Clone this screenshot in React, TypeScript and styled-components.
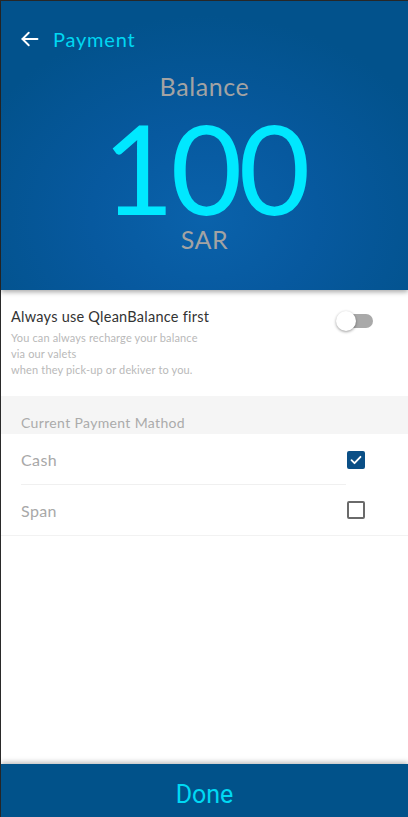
import React, { useState } from "react";
import styled, { createGlobalStyle } from "styled-components";

const Global = createGlobalStyle`
  html, body { margin: 0; padding: 0; height: 100%; }
  body {
    font-family: Lato, "Noto Sans", sans-serif;
    background: #ffffff;
    overflow: hidden;
  }
  #root { height: 100%; }
`;

const Screen = styled.div`
  height: 817px;
  box-sizing: border-box;
  border-top: 1px solid #2a2a2a;
  border-left: 1px solid #2a2a2a;
  display: flex;
  flex-direction: column;
  background: #ffffff;
`;

const Header = styled.header`
  height: 289px;
  flex-shrink: 0;
  background: radial-gradient(ellipse 62% 70% at 50% 75%, #0a62ab 0%, #07599f 45%, #02528c 100%);
  box-shadow: 0 2px 5px rgba(0, 0, 0, 0.35);
  position: relative;
  z-index: 1;
  display: flex;
  flex-direction: column;
  align-items: center;
`;

const TopBar = styled.div`
  align-self: stretch;
  display: flex;
  align-items: center;
  gap: 13px;
  padding: 25px 0 0 19px;
  height: 26px;
`;

const Title = styled.span`
  color: #00d7f2;
  font-size: 20px;
  letter-spacing: 0.8px;
`;

const BalanceLabel = styled.div`
  margin-top: 20px;
  color: #a3a3a3;
  font-size: 25px;
  letter-spacing: 0.6px;
  line-height: 28px;
`;

const Amount = styled.div`
  color: #00e8ff;
  font-size: 124px;
  font-weight: 400;
  line-height: 100px;
  margin-top: 17px;
  letter-spacing: -4px;
`;

const Currency = styled.div`
  color: #a3a3a3;
  font-size: 25px;
  letter-spacing: 0.5px;
  line-height: 28px;
  margin-top: 8px;
`;

const Body = styled.main`
  flex: 1;
  display: flex;
  flex-direction: column;
`;

const ToggleRow = styled.section`
  display: flex;
  justify-content: space-between;
  align-items: flex-start;
  padding: 18px 35px 16px 10px;
  height: 106px;
  box-sizing: border-box;
`;

const ToggleText = styled.div`
  display: flex;
  flex-direction: column;
`;

const ToggleTitle = styled.div`
  font-size: 14.5px;
  letter-spacing: 0.25px;
  color: #333333;
  line-height: 18px;
`;

const ToggleHint = styled.div`
  margin-top: 4px;
  font-size: 11px;
  letter-spacing: 0.15px;
  color: #b9b9b9;
  line-height: 16px;
`;

const Switch = styled.button`
  position: relative;
  width: 37px;
  height: 20px;
  margin-top: 3px;
  padding: 0;
  border: none;
  background: transparent;
  cursor: pointer;
`;

const Track = styled.span`
  position: absolute;
  left: 6px;
  right: 0;
  top: 3px;
  height: 14px;
  border-radius: 7px;
  background: #a9a9a9;
`;

const Thumb = styled.span`
  position: absolute;
  left: 0;
  top: 0;
  width: 20px;
  height: 20px;
  border-radius: 50%;
  background: #ffffff;
  box-shadow: 0 1px 3px rgba(0, 0, 0, 0.4);
`;

const SectionHead = styled.div`
  background: #f5f5f5;
  height: 38px;
  box-sizing: border-box;
  padding: 18px 0 0 20px;
  font-size: 14px;
  letter-spacing: 0.35px;
  color: #ababab;
  line-height: 18px;
`;

const Option = styled.label<{ $last?: boolean }>`
  display: flex;
  align-items: center;
  justify-content: space-between;
  height: 51px;
  box-sizing: border-box;
  padding: 0 43px 0 20px;
  position: relative;
  cursor: pointer;
  border-bottom: ${(p) => (p.$last ? "1px solid #f2f2f2" : "none")};
  &::after {
    content: "";
    display: ${(p) => (p.$last ? "none" : "block")};
    position: absolute;
    left: 20px;
    right: 62px;
    bottom: 0;
    height: 1px;
    background: #f0f0f0;
  }
`;

const OptionText = styled.span`
  font-size: 16px;
  letter-spacing: 0.4px;
  color: #a8a8a8;
`;

const Box = styled.span<{ $checked: boolean }>`
  width: 18px;
  height: 18px;
  box-sizing: border-box;
  border-radius: 2px;
  border: 2px solid ${(p) => (p.$checked ? "#0a4f86" : "#6a6a6a")};
  background: ${(p) => (p.$checked ? "#0a4f86" : "#ffffff")};
  display: flex;
  align-items: center;
  justify-content: center;
`;

const Footer = styled.button`
  height: 53px;
  flex-shrink: 0;
  border: none;
  background: #01528a;
  color: #00d9f3;
  font-family: Roboto, sans-serif;
  font-size: 25px;
  box-shadow: 0 -2px 5px rgba(0, 0, 0, 0.25);
  padding: 8px 0 0;
  cursor: pointer;
`;

export default function App() {
  const [method, setMethod] = useState("Cash");
  const [useBalance, setUseBalance] = useState(false);
  const methods = ["Cash", "Span"];
  return (
    <>
      <Global />
      <Screen>
        <Header>
          <TopBar>
            <svg width="20" height="20" viewBox="0 0 24 24" fill="none" stroke="#ffffff" strokeWidth="2.3" strokeLinecap="round" strokeLinejoin="round">
              <path d="M21 12H3" />
              <path d="M10.5 4.5L3 12l7.5 7.5" />
            </svg>
            <Title>Payment</Title>
          </TopBar>
          <BalanceLabel>Balance</BalanceLabel>
          <Amount>100</Amount>
          <Currency>SAR</Currency>
        </Header>
        <Body>
          <ToggleRow>
            <ToggleText>
              <ToggleTitle>Always use QleanBalance first</ToggleTitle>
              <ToggleHint>
                You can always recharge your balance
                <br />
                via our valets
                <br />
                when they pick-up or dekiver to you.
              </ToggleHint>
            </ToggleText>
            <Switch onClick={() => setUseBalance(!useBalance)} aria-pressed={useBalance}>
              <Track />
              <Thumb />
            </Switch>
          </ToggleRow>
          <SectionHead>Current Payment Mathod</SectionHead>
          {methods.map((m, i) => (
            <Option key={m} $last={i === methods.length - 1} onClick={() => setMethod(m)}>
              <OptionText>{m}</OptionText>
              <Box $checked={method === m}>
                {method === m && (
                  <svg width="12" height="10" viewBox="0 0 12 10" fill="none" stroke="#ffffff" strokeWidth="1.8" strokeLinecap="round" strokeLinejoin="round">
                    <path d="M1.5 5.2l3 3L10.5 1.8" />
                  </svg>
                )}
              </Box>
            </Option>
          ))}
        </Body>
        <Footer>Done</Footer>
      </Screen>
    </>
  );
}
